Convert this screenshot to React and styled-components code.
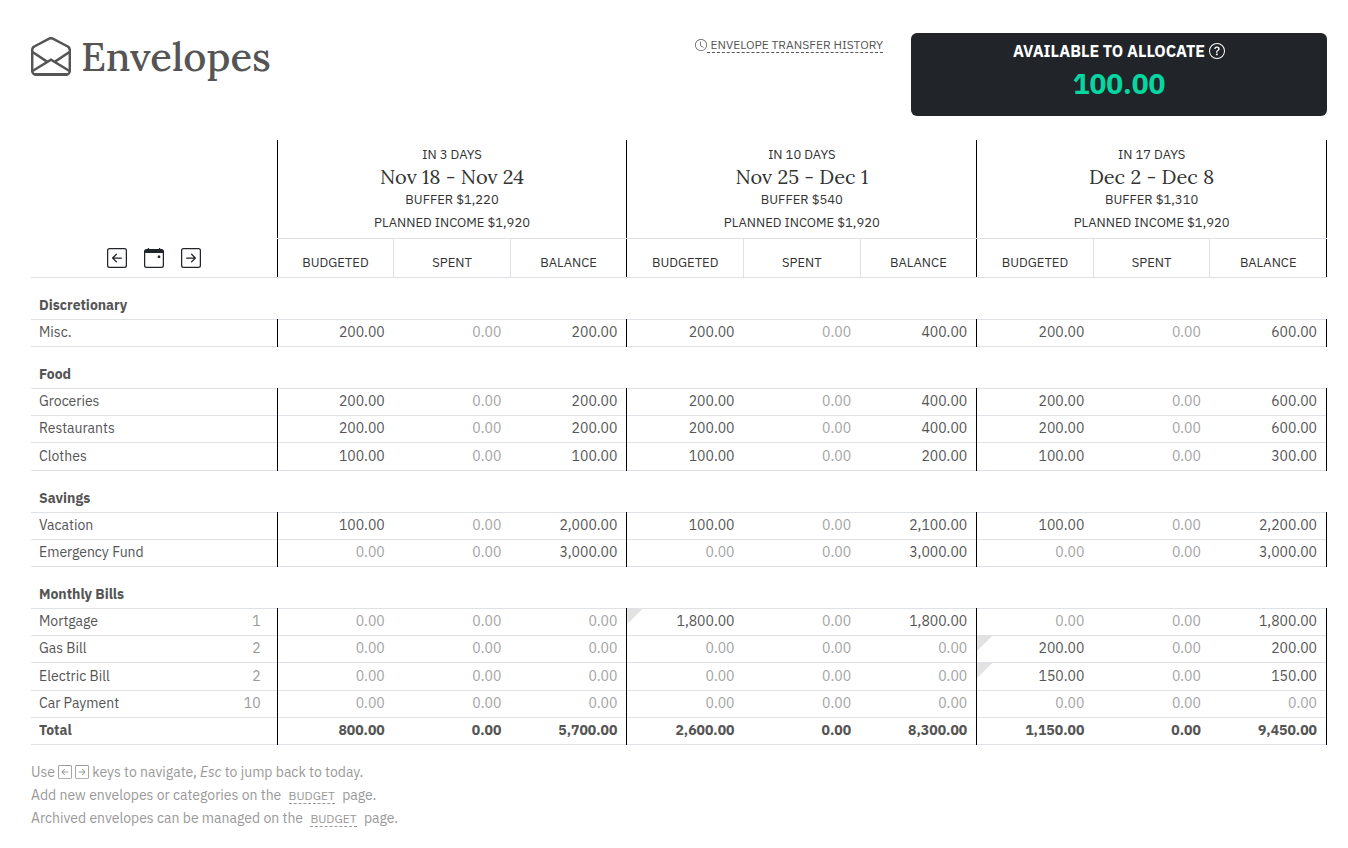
import React from 'react'
import styled, { createGlobalStyle, css } from 'styled-components'
import {
  BsArrowLeftSquare,
  BsArrowRightSquare,
  BsClock,
  BsQuestionCircle
} from 'react-icons/bs'

const colors = {
  text: '#555555',
  muted: '#999999',
  faint: '#a3a3a3',
  dark: '#212529',
  line: '#dee2e6',
  success: '#06d6a0'
}

const fonts = {
  body: `'IBM Plex Sans', Roboto, 'Liberation Sans', sans-serif`,
  heading: `Lora, 'Liberation Serif', serif`
}

const GlobalStyle = createGlobalStyle`
  *, *::before, *::after {
    box-sizing: border-box;
  }
  body {
    margin: 0;
    background: #fff;
    color: ${colors.text};
    font-family: ${fonts.body};
    font-size: 14px;
    line-height: 23px;
  }
`

const Page = styled.main`
  padding: 33px 21px 18px 31px;
`

const Header = styled.header`
  display: flex;
  align-items: flex-start;
  gap: 28px;
  margin-bottom: 24px;
`

const Title = styled.h1`
  display: flex;
  align-items: center;
  gap: 10px;
  flex: 1;
  margin: 0;
  font-family: ${fonts.heading};
  font-size: 40px;
  font-weight: 500;
  line-height: 48px;
`

const HistoryLink = styled.a`
  display: flex;
  align-items: center;
  margin-top: 4px;
  color: ${colors.text};
  font-size: 12px;
  line-height: 15px;
  text-decoration: none;
  text-transform: uppercase;
  span {
    padding-left: 3px;
    border-bottom: 1px dashed ${colors.text};
  }
`

const Allocate = styled.section`
  width: 416px;
  min-height: 83px;
  padding: 6px 16px;
  border-radius: 6px;
  background: ${colors.dark};
  text-align: center;
`

const AllocateLabel = styled.h2`
  display: flex;
  align-items: center;
  justify-content: center;
  gap: 4px;
  margin: 0;
  color: #fff;
  font-size: 16px;
  font-weight: 700;
  line-height: 24px;
  text-transform: uppercase;
`

const AllocateAmount = styled.div`
  color: ${colors.success};
  font-size: 28px;
  font-weight: 700;
  line-height: 42px;
`

const Table = styled.table`
  width: 100%;
  border-collapse: collapse;
  table-layout: fixed;
`

const NameCol = styled.col`
  width: 19%;
`

const periodEdge = css`
  border-left: 1px solid #000;
  &:last-child {
    border-right: 1px solid #000;
  }
`

const NavCell = styled.th`
  padding: 0 0 9px;
  border-bottom: 1px solid ${colors.line};
  vertical-align: bottom;
`

const NavButtons = styled.div`
  display: flex;
  justify-content: center;
  gap: 17px;
`

const NavButton = styled.button`
  display: flex;
  padding: 0;
  border: 0;
  background: none;
  color: ${colors.dark};
  cursor: pointer;
`

const PeriodCell = styled.th`
  height: 98px;
  padding: 3px 0 4px;
  border-bottom: 1px solid ${colors.line};
  color: #333;
  font-size: 13px;
  font-weight: 400;
  text-transform: uppercase;
  ${periodEdge}
`

const PeriodDates = styled.div`
  font-family: ${fonts.heading};
  font-size: 20px;
  line-height: 22px;
  text-transform: none;
`

const ColumnCell = styled.th`
  height: 39px;
  padding: 8px 0 0;
  border-bottom: 1px solid ${colors.line};
  border-left: 1px solid ${p => (p.$first ? '#000' : colors.line)};
  color: #333;
  font-size: 13px;
  font-weight: 400;
  text-transform: uppercase;
  &:last-child {
    border-right: 1px solid #000;
  }
`

const Group = styled.tbody`
  tr {
    height: 27px;
    border-bottom: 1px solid ${colors.line};
  }
  tr:nth-child(4) {
    height: 28px;
  }
`

const CategoryCell = styled.th`
  height: 42px;
  padding: 14px 8px 0;
  font-weight: 700;
  text-align: left;
`

const NameCell = styled.th`
  padding: 0 16px 1px 8px;
  font-weight: ${p => (p.$bold ? 700 : 400)};
  text-align: left;
`

const NameRow = styled.div`
  display: flex;
  justify-content: space-between;
`

const DueDay = styled.span`
  color: ${colors.muted};
`

const AmountCell = styled.td`
  position: relative;
  padding: 0 9px 1px 0;
  color: ${p => (p.$zero ? colors.faint : colors.text)};
  font-weight: ${p => (p.$bold ? 700 : 400)};
  text-align: right;
  ${p => p.$first && 'border-left: 1px solid #000;'}
  &:last-child {
    border-right: 1px solid #000;
  }
`

const DueCorner = styled.span`
  position: absolute;
  top: 0;
  left: 0;
  width: 15px;
  height: 15px;
  background: #e2e2e2;
  clip-path: polygon(0 0, 100% 0, 0 100%);
`

const Help = styled.footer`
  margin-top: 16px;
  color: ${colors.muted};
  p {
    height: 23px;
    margin: 0;
  }
  svg {
    margin-right: 3px;
    vertical-align: -2px;
  }
`

const BudgetLink = styled.a`
  margin: 0 4px;
  border-bottom: 1px dashed ${colors.muted};
  color: ${colors.muted};
  font-size: 12px;
  text-decoration: none;
  text-transform: uppercase;
`

const EnvelopeIcon = () => (
  <svg width="40" height="40" viewBox="0 0 40 40" fill="none" stroke="currentColor" strokeWidth="2.5" aria-hidden="true">
    <path d="M1.2 13c0-1.5.8-2.9 2.1-3.5L18.2 1.6a4 4 0 0 1 3.6 0l14.9 7.9c1.3.6 2.1 2 2.1 3.5v20.8a4 4 0 0 1-4 4H5.2a4 4 0 0 1-4-4z" />
    <path d="M1.5 15l14.5 9.6M38.5 15L24 24.6M1.5 34L20 22.6 38.5 34" />
    <path d="M4 37.5h32" strokeWidth="3" />
  </svg>
)

const CalendarIcon = () => (
  <svg width="20" height="20" viewBox="0 0 16 16" fill="currentColor" aria-hidden="true">
    <path fillRule="evenodd" d="M2 .7h12a2 2 0 0 1 2 2V14a2 2 0 0 1-2 2H2a2 2 0 0 1-2-2V2.700a2 2 0 0 1 2-2zM1 4v10a1 1 0 0 0 1 1h12a1 1 0 0 0 1-1V4z" />
    <path d="M3 0h1v1.500H3zM12 0h1v1.500h-1z" />
    <rect x="11" y="6" width="2" height="2" rx=".3" />
  </svg>
)

const periods = [
  { starts: 'In 3 days', dates: 'Nov 18 - Nov 24', buffer: '$1,220', income: '$1,920' },
  { starts: 'In 10 days', dates: 'Nov 25 - Dec 1', buffer: '$540', income: '$1,920' },
  { starts: 'In 17 days', dates: 'Dec 2 - Dec 8', buffer: '$1,310', income: '$1,920' }
]

// amounts: budgeted, spent, balance for each period
const groups = [
  {
    name: 'Discretionary',
    envelopes: [{ name: 'Misc.', amounts: [200, 0, 200, 200, 0, 400, 200, 0, 600] }]
  },
  {
    name: 'Food',
    envelopes: [
      { name: 'Groceries', amounts: [200, 0, 200, 200, 0, 400, 200, 0, 600] },
      { name: 'Restaurants', amounts: [200, 0, 200, 200, 0, 400, 200, 0, 600] },
      { name: 'Clothes', amounts: [100, 0, 100, 100, 0, 200, 100, 0, 300] }
    ]
  },
  {
    name: 'Savings',
    envelopes: [
      { name: 'Vacation', amounts: [100, 0, 2000, 100, 0, 2100, 100, 0, 2200] },
      { name: 'Emergency Fund', amounts: [0, 0, 3000, 0, 0, 3000, 0, 0, 3000] }
    ]
  },
  {
    name: 'Monthly Bills',
    envelopes: [
      { name: 'Mortgage', day: 1, duePeriod: 1, amounts: [0, 0, 0, 1800, 0, 1800, 0, 0, 1800] },
      { name: 'Gas Bill', day: 2, duePeriod: 2, amounts: [0, 0, 0, 0, 0, 0, 200, 0, 200] },
      { name: 'Electric Bill', day: 2, duePeriod: 2, amounts: [0, 0, 0, 0, 0, 0, 150, 0, 150] },
      { name: 'Car Payment', day: 10, amounts: [0, 0, 0, 0, 0, 0, 0, 0, 0] },
      { name: 'Total', total: true, amounts: [800, 0, 5700, 2600, 0, 8300, 1150, 0, 9450] }
    ]
  }
]

const formatAmount = value =>
  value.toLocaleString('en-US', { minimumFractionDigits: 2 })

const EnvelopeRow = ({ name, day, duePeriod, total, amounts }) => (
  <tr>
    <NameCell scope="row" $bold={total}>
      <NameRow>
        <span>{name}</span>
        {day ? <DueDay>{day}</DueDay> : null}
      </NameRow>
    </NameCell>
    {amounts.map((amount, i) => (
      <AmountCell key={i} $first={i % 3 === 0} $zero={!amount && !total} $bold={total}>
        {duePeriod && i === duePeriod * 3 ? <DueCorner /> : null}
        {formatAmount(amount)}
      </AmountCell>
    ))}
  </tr>
)

const App = () => (
  <Page>
    <GlobalStyle />
    <Header>
      <Title>
        <EnvelopeIcon />
        Envelopes
      </Title>
      <HistoryLink href="#history">
        <BsClock size={12} />
        <span>Envelope transfer history</span>
      </HistoryLink>
      <Allocate>
        <AllocateLabel>
          Available to allocate <BsQuestionCircle size={16} />
        </AllocateLabel>
        <AllocateAmount>100.00</AllocateAmount>
      </Allocate>
    </Header>

    <Table>
      <colgroup>
        <NameCol />
        <col span="9" />
      </colgroup>
      <thead>
        <tr>
          <NavCell rowSpan="2">
            <NavButtons>
              <NavButton aria-label="Previous">
                <BsArrowLeftSquare size={20} />
              </NavButton>
              <NavButton aria-label="Today">
                <CalendarIcon />
              </NavButton>
              <NavButton aria-label="Next">
                <BsArrowRightSquare size={20} />
              </NavButton>
            </NavButtons>
          </NavCell>
          {periods.map(period => (
            <PeriodCell key={period.dates} colSpan="3">
              <div>{period.starts}</div>
              <PeriodDates>{period.dates}</PeriodDates>
              <div>Buffer {period.buffer}</div>
              <div>Planned income {period.income}</div>
            </PeriodCell>
          ))}
        </tr>
        <tr>
          {periods.map(period => (
            <React.Fragment key={period.dates}>
              <ColumnCell $first>Budgeted</ColumnCell>
              <ColumnCell>Spent</ColumnCell>
              <ColumnCell>Balance</ColumnCell>
            </React.Fragment>
          ))}
        </tr>
      </thead>
      {groups.map(group => (
        <Group key={group.name}>
          <tr>
            <CategoryCell colSpan="10">{group.name}</CategoryCell>
          </tr>
          {group.envelopes.map(envelope => (
            <EnvelopeRow key={envelope.name} {...envelope} />
          ))}
        </Group>
      ))}
    </Table>

    <Help>
      <p>
        Use <BsArrowLeftSquare size={14} />
        <BsArrowRightSquare size={14} />
        keys to navigate, <em>Esc</em> to jump back to today.
      </p>
      <p>
        Add new envelopes or categories on the{' '}
        <BudgetLink href="#budget">Budget</BudgetLink> page.
      </p>
      <p>
        Archived envelopes can be managed on the{' '}
        <BudgetLink href="#budget">Budget</BudgetLink> page.
      </p>
    </Help>
  </Page>
)

export default App
